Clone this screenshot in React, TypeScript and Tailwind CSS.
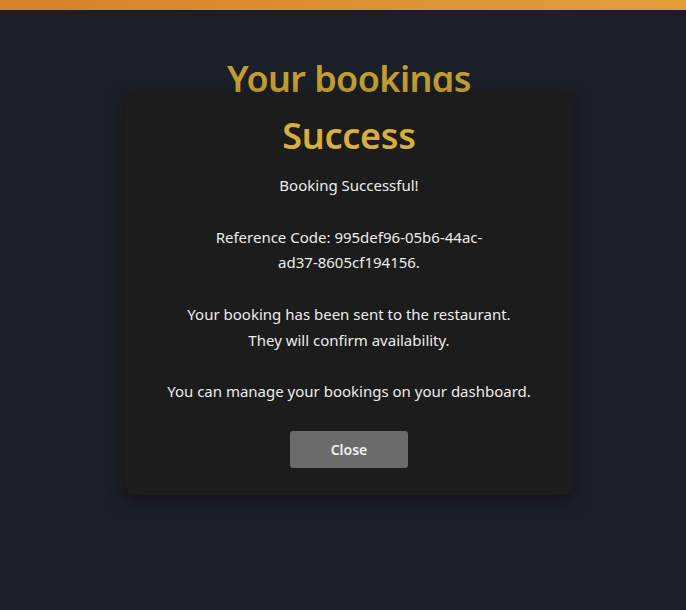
import React from "react";

const MESSAGE = `Booking Successful!

Reference Code: 995def96-05b6-44ac-
ad37-8605cf194156.

Your booking has been sent to the restaurant.
They will confirm availability.

You can manage your bookings on your dashboard.`;

export default function App() {
  return (
    <div
      className="relative min-h-[610px] bg-[#1b1f27] overflow-hidden"
      style={{ fontFamily: '"Noto Sans", "Open Sans", sans-serif' }}
    >
      {/* top accent bar */}
      <div className="h-[10px] bg-gradient-to-r from-[#d5822a] to-[#e29f38]" />

      <div className="pl-3">
        <h1 className="mt-[49px] text-center text-[36px] leading-[40px] font-semibold text-[#c29e2f] tracking-[-0.6px]">
          Your bookings
        </h1>
      </div>

      {/* modal */}
      <div className="absolute inset-0 pl-3 pt-[92px] flex justify-center">
        <div className="w-[448px] h-[403px] bg-[#1c1c1c] rounded-lg shadow-[0_6px_16px_rgba(0,0,0,0.35)] px-6 pt-[18px] flex flex-col items-center">
          <h2 className="text-[36px] leading-[52px] font-semibold text-[#d6b03a] tracking-[-0.3px]">
            Success
          </h2>
          <p className="mt-[11px] whitespace-pre-line text-center text-[15px] leading-[25.8px] text-[#ececec]">
            {MESSAGE}
          </p>
          <button className="mt-[26px] w-[118px] h-[37px] rounded-[3px] bg-[#6b6b6b] text-[14px] font-semibold text-[#f0f0f0]">
            Close
          </button>
        </div>
      </div>
    </div>
  );
}
